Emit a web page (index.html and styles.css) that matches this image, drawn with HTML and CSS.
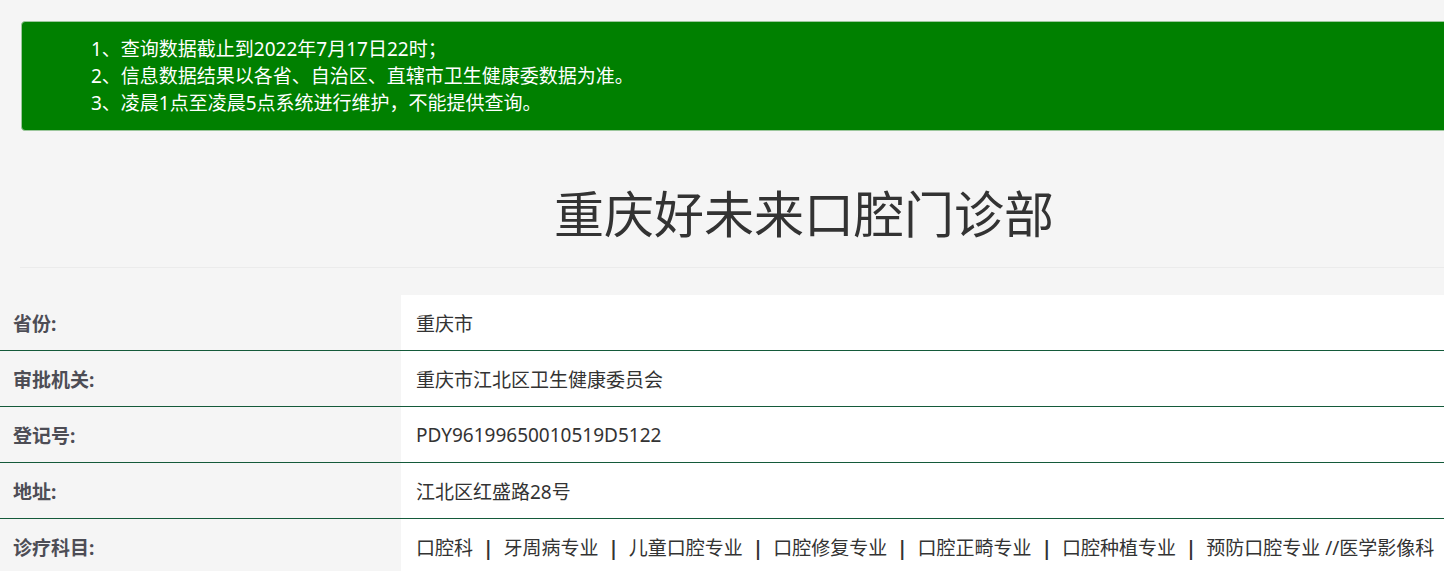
FILE: index.html
```html
<!DOCTYPE html>
<html lang="zh-CN">
<head>
<meta charset="utf-8">
<title>重庆好未来口腔门诊部</title>
<link rel="stylesheet" href="styles.css">
</head>
<body>
<div class="page">
  <div class="notice">
    <ul class="notice-list">
      <li>1、查询数据截止到2022年7月17日22时；</li>
      <li>2、信息数据结果以各省、自治区、直辖市卫生健康委数据为准。</li>
      <li>3、凌晨1点至凌晨5点系统进行维护，不能提供查询。</li>
    </ul>
  </div>
  <div class="header">
    <h1 class="title">重庆好未来口腔门诊部</h1>
  </div>
  <table class="info">
    <tr><th>省份:</th><td>重庆市</td></tr>
    <tr><th>审批机关:</th><td>重庆市江北区卫生健康委员会</td></tr>
    <tr><th>登记号:</th><td>PDY96199650010519D5122</td></tr>
    <tr><th>地址:</th><td>江北区红盛路28号</td></tr>
    <tr><th>诊疗科目:</th><td>口腔科 <span class="sep">|</span> 牙周病专业 <span class="sep">|</span> 儿童口腔专业 <span class="sep">|</span> 口腔修复专业 <span class="sep">|</span> 口腔正畸专业 <span class="sep">|</span> 口腔种植专业 <span class="sep">|</span> 预防口腔专业 //医学影像科</td></tr>
  </table>
</div>
</body>
</html>
```

FILE: styles.css
```css
html, body {
  margin: 0;
  padding: 0;
  overflow: hidden;
}
body {
  background: #f5f5f5;
  font-family: "Noto Sans", "Noto Sans CJK SC", sans-serif;
  color: #333;
}
.page {
  width: 1700px;
}
.notice {
  margin: 21px 0 0 21px;
  width: 1600px;
  background: #008000;
  border: 1px solid #9cc79c;
  border-radius: 4px;
  box-sizing: border-box;
  height: 110px;
  padding: 14px 0 0 69px;
}
.notice-list {
  list-style: none;
  margin: 0;
  padding: 0;
  color: #fff;
  font-size: 19px;
  line-height: 27px;
}
.header {
  margin-left: 20px;
  width: 1568px;
  border-bottom: 1px solid #ebebeb;
  padding: 51px 0 26px;
  text-align: center;
}
.title {
  margin: 0;
  font-size: 50px;
  font-weight: normal;
  line-height: 59px;
  color: #333;
  font-family: "Noto Sans CJK SC", sans-serif;
}
.info {
  margin-top: 27px;
  border-collapse: collapse;
  width: 1700px;
  font-size: 19px;
}
.info th {
  width: 401px;
  box-sizing: border-box;
  text-align: left;
  font-weight: bold;
  color: #4d4d55;
  padding: 0 0 0 13px;
  height: 55px;
  background: #f5f5f5;
  border-bottom: 1px solid #145a3a;
}
.info td {
  background: #fff;
  padding: 0 0 0 15px;
  height: 55px;
  color: #333;
  white-space: nowrap;
  border-bottom: 1px solid #145a3a;
}
.info .sep {
  font-weight: bold;
  margin: 0 5px;
}
.info tr:last-child th,
.info tr:last-child td {
  border-bottom: none;
}
```
